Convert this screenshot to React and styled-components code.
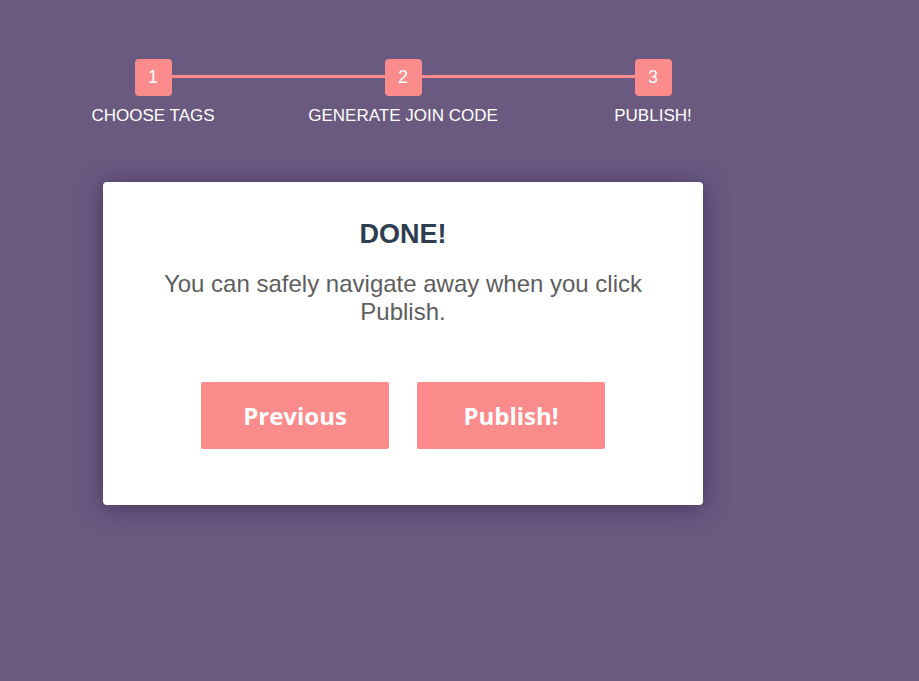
import React from 'react';
import styled, { createGlobalStyle } from 'styled-components';

const GlobalStyle = createGlobalStyle`
    html, body {
        margin: 0;
        padding: 0;
        background: #6a5a80;
        font-family: 'Liberation Sans', Arial, sans-serif;
    }
`;

const steps = ['CHOOSE TAGS', 'GENERATE JOIN CODE', 'PUBLISH!'];

function App() {
    return (
        <>
            <GlobalStyle />
            <Page>
                <Stepper>
                    {steps.map((label, i) => (
                        <Step key={label}>
                            <StepBox>{i + 1}</StepBox>
                            <StepLabel>{label}</StepLabel>
                        </Step>
                    ))}
                </Stepper>
                <Card>
                    <Title>DONE!</Title>
                    <Message>You can safely navigate away when you click Publish.</Message>
                    <Buttons>
                        <Button>Previous</Button>
                        <Button>Publish!</Button>
                    </Buttons>
                </Card>
            </Page>
        </>
    );
}

export default App;

const Page = styled.div`
    width: 919px;
    height: 681px;
    padding-top: 59px;
    box-sizing: border-box;
    overflow: hidden;
`;

const Stepper = styled.div`
    display: flex;
    margin-left: 28px;
`;

const Step = styled.div`
    position: relative;
    width: 250px;
    display: flex;
    flex-direction: column;
    align-items: center;

    &:not(:last-child)::after {
        content: '';
        position: absolute;
        top: 16px;
        left: 50%;
        width: 250px;
        height: 3px;
        background: #fc8b8b;
    }
`;

const StepBox = styled.div`
    position: relative;
    z-index: 1;
    width: 37px;
    height: 37px;
    border-radius: 4px;
    background: #fc8b8b;
    color: #ffffff;
    font-size: 18px;
    display: flex;
    align-items: center;
    justify-content: center;
`;

const StepLabel = styled.div`
    margin-top: 11px;
    font-size: 17px;
    line-height: 18px;
    color: #ffffff;
    white-space: nowrap;
`;

const Card = styled.div`
    width: 600px;
    margin: 57px 0 0 103px;
    padding: 37px 50px 56px;
    box-sizing: border-box;
    background: #ffffff;
    border-radius: 4px;
    box-shadow: 0 3px 22px rgba(40, 20, 60, 0.55);
    text-align: center;
`;

const Title = styled.h2`
    margin: 0;
    font-size: 27px;
    line-height: 30px;
    font-weight: 700;
    color: #2c3e50;
`;

const Message = styled.p`
    margin: 21px 0 0;
    font-size: 24px;
    line-height: 28px;
    color: #5e5e5e;
`;

const Buttons = styled.div`
    display: flex;
    justify-content: center;
    gap: 28px;
    margin-top: 56px;
`;

const Button = styled.button`
    width: 188px;
    height: 67px;
    border: none;
    border-radius: 2px;
    background: #fc8b8b;
    color: #ffffff;
    font-family: 'Open Sans', 'Liberation Sans', sans-serif;
    font-weight: 700;
    font-size: 24px;
    cursor: pointer;
`;
